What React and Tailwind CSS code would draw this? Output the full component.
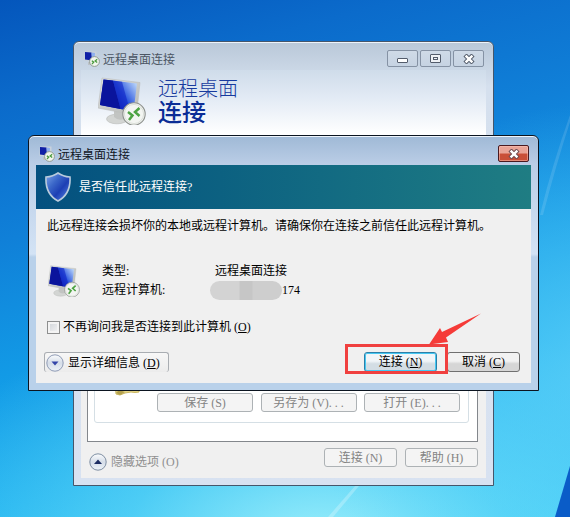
import { useId } from 'react'
import clsx from 'clsx'

const songti = "font-['Liberation_Serif','Noto_Sans_CJK_SC',sans-serif]"
const yahei = "font-['Noto_Sans_CJK_SC',sans-serif]"

function RemoteIcon({ className }) {
    const id = useId()
    return (
        <svg viewBox="0 0 48 48" className={className} aria-hidden="true">
            <defs>
                <linearGradient id={`${id}s`} x1="0" y1="0.8" x2="1" y2="0.2">
                    <stop offset="0.3" stopColor="#0d1fb0" />
                    <stop offset="0.6" stopColor="#2a55de" />
                    <stop offset="1" stopColor="#b3cff8" />
                </linearGradient>
                <linearGradient id={`${id}b`} x1="0" y1="0" x2="1" y2="1">
                    <stop offset="0" stopColor="#e0e2e0" />
                    <stop offset="1" stopColor="#b4b6b4" />
                </linearGradient>
            </defs>
            <ellipse cx="19" cy="42" rx="10.500" ry="4.800" fill="#d3d5d3" stroke="#b8bab8" strokeWidth="0.600" />
            <path d="M16 33 L27 35 L26 42 Q20 44 16 40 Z" fill="#c2c4c2" />
            <path d="M4 1 L42 5.500 L38.500 38.500 L0 31 Z" fill={`url(#${id}b)`} stroke="#bcbebc" strokeWidth="0.600" />
            <path d="M5.500 2.500 L39 6.500 L35.500 34.500 L2 28 Z" fill={`url(#${id}s)`} />
            <path d="M5.500 2.500 L15 3.600 L22.500 32 L2 28 Z" fill="#0a149c" />
            <path d="M15 3.600 L24 4.700 L32 33.800 L22.500 32 Z" fill="#1024c4" opacity="0.600" />
            <circle cx="36" cy="37" r="11.200" fill="#f3f5f2" stroke="#8d918d" strokeWidth="1.100" />
            <circle cx="36" cy="37" r="9.600" fill="none" stroke="#d3d8d0" strokeWidth="0.800" />
            <path d="M30 35 L34.500 38.500 L31 43" fill="none" stroke="#4da343" strokeWidth="2.500" />
            <path d="M41.500 31 L37 35 L41.500 39" fill="none" stroke="#4da343" strokeWidth="2.500" />
        </svg>
    )
}

// 16px caption version
function RemoteIconSmall() {
    return (
        <svg viewBox="0 0 16 16" className="size-4 shrink-0" aria-hidden="true">
            <path d="M1 0.500 H12.500 V10 L10 11 L0.500 10 Z" fill="#c9d2dc" />
            <path d="M1 1 L7.500 1.500 L8 9.500 L1 8.500 Z" fill="#0f1fa6" />
            <path d="M7.500 1.500 L11 2 L10.500 9.500 L8 9.500 Z" fill="#8fb0ee" />
            <path d="M4 11 H8 V14 H4 Z" fill="#bcc2c8" />
            <circle cx="10.500" cy="10.500" r="4.900" fill="#f2f6ee" stroke="#8a938a" strokeWidth="0.900" />
            <path d="M7.800 9.800 L9.700 11.200 L8 13" fill="none" stroke="#4a9a3e" strokeWidth="1.300" />
            <path d="M13.200 8.300 L11.200 10 L13.200 11.600" fill="none" stroke="#4a9a3e" strokeWidth="1.300" />
        </svg>
    )
}

function ShieldIcon() {
    return (
        <svg viewBox="0 0 26 30" className="h-[30px] w-[26px] shrink-0" aria-hidden="true">
            <defs>
                <linearGradient id="shieldFill" x1="0" y1="0" x2="1" y2="1">
                    <stop offset="0" stopColor="#7da5ea" />
                    <stop offset="0.35" stopColor="#3a66c8" />
                    <stop offset="0.6" stopColor="#1d3fb4" />
                    <stop offset="1" stopColor="#5d8ce8" />
                </linearGradient>
            </defs>
            <path
                d="M13 1 Q18 4.500 25 5 Q26 22 13 29 Q0 22 1 5 Q8 4.500 13 1 Z"
                fill="url(#shieldFill)"
                stroke="#b9cbdc"
                strokeWidth="1.600"
            />
        </svg>
    )
}

function FolderIcon({ className }) {
    return (
        <svg viewBox="0 0 32 32" className={className} aria-hidden="true">
            <path d="M3 4 H13 L16 7 H28 V28 Q24 29 20 28 L14 29 L9 31 L5 30 Z" fill="#e6d68a" stroke="#c9b661" />
            <path d="M9 31 L5 29 L8 26 L14 28 Z" fill="#b3a04d" />
        </svg>
    )
}

function RoundArrow({ up }) {
    return (
        <svg viewBox="0 0 18 18" className="size-[18px] shrink-0" aria-hidden="true">
            <defs>
                <linearGradient id={up ? 'roundUp' : 'roundDown'} x1="0" y1="0" x2="0" y2="1">
                    <stop offset="0" stopColor="#fbfcfd" />
                    <stop offset="0.5" stopColor="#d5dde8" />
                    <stop offset="1" stopColor="#eef3f8" />
                </linearGradient>
            </defs>
            <circle cx="9" cy="9" r="8.200" fill={up ? 'url(#roundUp)' : 'url(#roundDown)'} stroke={up ? '#7f8fa3' : '#8f9bb5'} />
            <path d={up ? 'M5 11 L9 6.500 L13 11 Z' : 'M5.500 7.500 H12.500 L9 11.500 Z'} fill={up ? '#1d2d62' : '#3345a8'} />
        </svg>
    )
}

function CrossGlyph({ outline }) {
    return (
        <svg viewBox="0 0 12 10" className="h-2.5 w-3" aria-hidden="true">
            <path d="M2 1 L10 9 M10 1 L2 9" stroke={outline} strokeWidth="4.400" />
            <path d="M2.600 1.600 L9.400 8.400 M9.400 1.600 L2.600 8.400" stroke="#fff" strokeWidth="2.400" />
        </svg>
    )
}

function CaptionButton({ label, children }) {
    return (
        <button
            type="button"
            aria-label={label}
            className="flex h-[17px] w-[31px] items-center justify-center rounded-xs border border-[#8592a4] bg-[#c6d3e1] bg-linear-to-b from-[#cfdae7] to-[#c6d3e2]"
        >
            {children}
        </button>
    )
}

// access key in brackets, e.g. (N)
function Key({ k, underline }) {
    return (
        <span className="ml-[3px]">
            ({underline ? <u className="underline-offset-1">{k}</u> : k})
        </span>
    )
}

function PushButton({ className, children, ...rest }) {
    return (
        <button
            type="button"
            className={clsx('flex items-center justify-center rounded-[3px] border text-xs whitespace-nowrap', className)}
            {...rest}
        >
            {children}
        </button>
    )
}

const disabledButton = 'border-[#adb2b5] bg-[#f4f4f4] text-[#838383]'

function ConnectionWindow() {
    return (
        <section className="absolute top-[41px] right-[76px] left-[73px] rounded-t-md border border-[#45566b] bg-[#d8e3f1] bg-linear-to-b from-[#b9c8d8] via-[#d5e0ee] via-10% to-[#d8e2f1] px-[7px] pb-[7px] inset-shadow-[0_1px_0_#eef4fa]">
            <header className="flex h-7 items-end pb-[3px]">
                <div className="flex flex-1 items-center gap-[3px] pl-[3px]">
                    <RemoteIconSmall />
                    <h1 className={clsx(yahei, 'text-xs leading-4 text-[#4b5563]')}>远程桌面连接</h1>
                </div>
                <div className="mr-0.5 flex gap-0.5">
                    <CaptionButton label="最小化">
                        <span className="mt-1 h-[5px] w-[11px] rounded-[1px] border border-[#535c6b] bg-white" />
                    </CaptionButton>
                    <CaptionButton label="最大化">
                        <span className="flex h-[9px] w-[11px] items-center justify-center rounded-[1px] border border-[#535c6b] bg-[#eef1f5]">
                            <span className="h-[3px] w-[5px] border border-[#535c6b]" />
                        </span>
                    </CaptionButton>
                    <CaptionButton label="关闭">
                        <CrossGlyph outline="#535c6b" />
                    </CaptionButton>
                </div>
            </header>

            <div className="bg-[#f0f0f0]">
                <div className="flex items-start gap-3 bg-linear-to-b from-[#cfdcea] via-[#e3ebf5] via-40% to-white to-90% px-[17px] pt-[7px] pb-4">
                    <RemoteIcon className="size-12" />
                    <h2 className={clsx(yahei, 'text-[#173a9e]')}>
                        <span className="block text-[20px] leading-[22px] font-light">远程桌面</span>
                        <span className="block text-[24px] leading-[24px] font-medium text-[#0b2d96]">连接</span>
                    </h2>
                </div>

                <div className="mr-2 ml-1.5 flex min-h-[301px] flex-col justify-end border border-[#83878c] bg-white pr-2 pb-[18px] pl-1.5">
                    <div className="flex h-40 items-end rounded-[3px] border border-[#d5dfe5] pr-2 pb-2.5 pl-4">
                        <FolderIcon className="mb-4 size-8 shrink-0" />
                        <div className="ml-3.5 flex flex-1 justify-between">
                            <PushButton disabled className={clsx(disabledButton, 'h-[19px] w-24')}>保存<Key k="S" /></PushButton>
                            <PushButton disabled className={clsx(disabledButton, 'h-[19px] w-24')}>另存为<Key k="V" />. . .</PushButton>
                            <PushButton disabled className={clsx(disabledButton, 'h-[19px] w-24')}>打开<Key k="E" />. . .</PushButton>
                        </div>
                    </div>
                </div>

                <footer className="flex items-start gap-2 pt-1.5 pr-2 pb-[7px] pl-2">
                    <button type="button" disabled className="mt-[5px] flex items-center gap-1 text-xs text-[#8f8f8f]">
                        <RoundArrow up />
                        <span>隐藏选项<Key k="O" /></span>
                    </button>
                    <div className="flex-1" />
                    <PushButton disabled className={clsx(disabledButton, 'h-[19px] w-[73px]')}>连接<Key k="N" /></PushButton>
                    <PushButton disabled className={clsx(disabledButton, 'h-[19px] w-[73px]')}>帮助<Key k="H" /></PushButton>
                </footer>
            </div>
        </section>
    )
}

function TrustDialog() {
    return (
        <section
            role="dialog"
            aria-labelledby="trust-title"
            className="absolute top-[135px] right-[31px] left-7 rounded-t-md border border-[#0b1420] bg-[#b9d1ea] bg-[linear-gradient(to_bottom,#9fb9d6_0,#bacde6_28px,#d3e3f5_118px,#b9d1ea_121px)] px-[7px] pb-[7px] inset-shadow-[0_1px_0_#eef5fc]"
        >
            <header className="flex h-[29px] items-end pb-[3px]">
                <div className="flex flex-1 items-center gap-[3px] pl-[3px]">
                    <RemoteIconSmall />
                    <h1 id="trust-title" className={clsx(yahei, 'text-xs leading-4 text-[#10161f]')}>远程桌面连接</h1>
                </div>
                <button
                    type="button"
                    aria-label="关闭"
                    className="mr-0.5 flex h-[17px] w-[31px] items-center justify-center rounded-xs border border-[#4a1a20] bg-linear-to-b from-[#e9a396] from-45% to-[#c94f38] to-55% inset-shadow-[0_0_0_1px_rgba(255,200,185,0.5)]"
                >
                    <CrossGlyph outline="#6d4a50" />
                </button>
            </header>

            <div className="flex h-11 items-center gap-2 bg-linear-to-r from-[#04507f] to-[#1f7d83] px-[9px] text-white">
                <ShieldIcon />
                <p className="text-xs">是否信任此远程连接?</p>
            </div>

            <div className="bg-[#f0f0f0] pt-2 text-xs text-black">
                <p className="px-[11px] leading-[18px]">
                    此远程连接会损坏你的本地或远程计算机。请确保你在连接之前信任此远程计算机。
                </p>

                <div className="mt-[27px] flex items-center gap-[22px] px-3">
                    <RemoteIcon className="size-8 shrink-0" />
                    <dl className="grid flex-1 grid-cols-[108px_1fr] leading-[19px]">
                        <dt>类型:</dt>
                        <dd className="pl-[5px]">远程桌面连接</dd>
                        <dt>远程计算机:</dt>
                        <dd className="flex items-center">
                            {/* masked part of the address */}
                            <span className="h-[19px] w-[72px] rounded-full bg-[linear-gradient(to_right,#d3d3d3_40%,#c6c6c6_42%,#c6c6c6_58%,#cecece_60%)]" />
                            174
                        </dd>
                    </dl>
                </div>

                <div className="mt-[18px] flex items-center gap-[3px] px-[11px] leading-[18px]">
                    <input
                        id="dont-ask"
                        type="checkbox"
                        className="size-[13px] appearance-none border border-[#8e8f8f] bg-linear-to-br from-[#cfd3d8] to-[#f6f6f6] inset-ring-2 inset-ring-[#f4f4f4] checked:bg-[#3b5fb5]"
                    />
                    <label htmlFor="dont-ask">不再询问我是否连接到此计算机<Key k="O" underline /></label>
                </div>

                <footer className="mt-4 flex items-center gap-2.5 pr-[11px] pb-[11px] pl-2">
                    <button
                        type="button"
                        className="flex h-5 w-[125px] items-center gap-1 rounded-[3px] border border-b-0 border-[#a9adb2] bg-linear-to-b from-[#f7f7f7] to-[#ececec] pl-px whitespace-nowrap"
                    >
                        <RoundArrow />
                        <span>显示详细信息<Key k="D" underline /></span>
                    </button>
                    <div className="flex-1" />
                    <div className="relative z-10">
                        <PushButton className="h-5 w-[73px] border-[#2c7fa8] bg-linear-to-b from-[#f1f5f8] from-45% to-[#d3dde4] to-60% inset-ring inset-ring-[#46c8f2]">
                            连接<Key k="N" underline />
                        </PushButton>
                        {/* highlight frame and arrow */}
                        <div className="pointer-events-none absolute -top-2 -right-[11px] -bottom-0.5 -left-[19px] border-3 border-[#f0403f]" />
                        <svg viewBox="0 0 53 32" className="pointer-events-none absolute -top-[39px] left-[65px] h-8 w-[53px]" aria-hidden="true">
                            <path d="M0 31.500 L11 15 L13 19 L52 0.500 L17 24.500 L19 29 Z" fill="#f53b38" />
                        </svg>
                    </div>
                    <PushButton className="h-5 w-[73px] border-[#707070] bg-linear-to-b from-[#f2f2f2] from-45% to-[#d6d6d6] to-60%">
                        取消<Key k="C" underline />
                    </PushButton>
                </footer>
            </div>
        </section>
    )
}

function App() {
    return (
        <main
            className={clsx(
                songti,
                'relative min-h-screen overflow-hidden bg-[#0d6fd0]',
                'bg-[radial-gradient(ellipse_75%_45%_at_56%_104%,rgba(170,244,252,0.85),rgba(120,228,250,0.5)_45%,transparent),linear-gradient(165deg,#0456bc_0%,#0b6bcb_16%,#1080d8_36%,#129ae6_56%,#1cb0ef_76%,#34caf5_100%)]'
            )}
        >
            {/* wallpaper light rays and dark corner */}
            <svg viewBox="0 0 570 517" preserveAspectRatio="none" className="absolute inset-0 size-full" aria-hidden="true">
                <defs>
                    <radialGradient id="glow" cx="1.050" cy="0.720" r="0.520">
                        <stop offset="0" stopColor="#5ed0f8" stopOpacity="0.800" />
                        <stop offset="1" stopColor="#5ed0f8" stopOpacity="0" />
                    </radialGradient>
                </defs>
                <rect width="570" height="517" fill="url(#glow)" />
                <path d="M570 466 L570 517 L555 517 Z" fill="#0a5cc8" />
                <path d="M355 486 L328 517 L333 517 L359 486 Z" fill="#fff" opacity="0.250" />
                <path d="M570 115 Q552 165 540 215 L543 215 Q556 165 570 122 Z" fill="#fff" opacity="0.120" />
            </svg>
            <ConnectionWindow />
            <TrustDialog />
        </main>
    )
}

export default App
